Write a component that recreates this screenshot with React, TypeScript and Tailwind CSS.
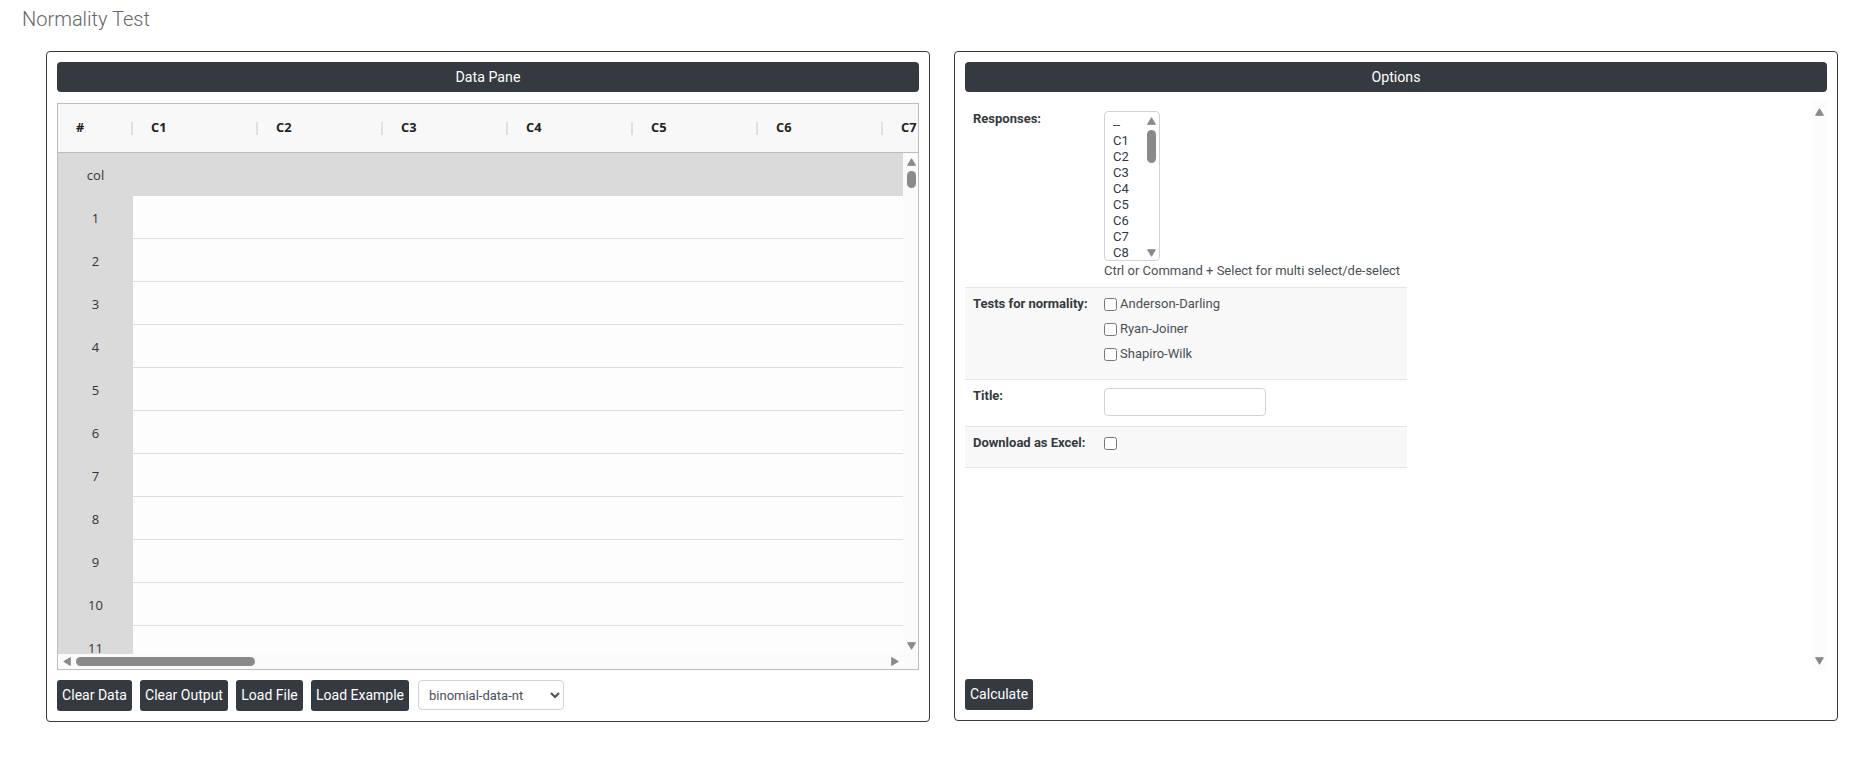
const Tri = ({ dir, className }: { dir: "up" | "down" | "left" | "right"; className?: string }) => {
  const pts = {
    up: "4.5,0.7 8.4,7.3 0.6,7.3",
    down: "0.6,0.7 8.4,0.7 4.5,7.3",
    left: "7.3,0.6 7.3,8.4 0.7,4.5",
    right: "0.7,0.6 0.7,8.4 7.3,4.5",
  }[dir];
  const size = dir === "up" || dir === "down" ? "w-[9px] h-[8px]" : "w-[8px] h-[9px]";
  const box = dir === "up" || dir === "down" ? "0 0 9 8" : "0 0 8 9";
  return (
    <svg viewBox={box} className={`${size} block shrink-0 ${className ?? ""}`}>
      <polygon points={pts} fill="#8a8a8a" stroke="#8a8a8a" strokeWidth="1" strokeLinejoin="round" />
    </svg>
  );
};

const Btn = ({ children, className }: { children: string; className: string }) => (
  <button className={`h-[31px] shrink-0 text-center rounded-[3px] bg-[#343a40] text-white text-[14px] leading-[31px] whitespace-nowrap font-['Roboto',sans-serif] ${className}`}>
    {children}
  </button>
);

const columns = ["C1", "C2", "C3", "C4", "C5", "C6", "C7"];
const rows = ["1", "2", "3", "4", "5", "6", "7", "8", "9", "10", "11"];
const responseOptions = ["--", "C1", "C2", "C3", "C4", "C5", "C6", "C7", "C8"];
const tests = ["Anderson-Darling", "Ryan-Joiner", "Shapiro-Wilk"];

const Label = ({ children }: { children: string }) => (
  <div className="w-[139px] shrink-0 pl-[8px] text-[13px] leading-[16px] font-bold text-[#343a40] whitespace-nowrap">
    {children}
  </div>
);

const DataPane = () => (
  <section className="w-[884px] h-[671px] shrink-0 border border-[#343a40] rounded-[4px] p-[10px] flex flex-col">
    <div className="h-[30px] shrink-0 rounded-[4px] bg-[#343a40] text-white text-[14.2px] leading-[31px] text-center">
      Data Pane
    </div>
    <div className="mt-[11px] h-[567px] shrink-0 border border-[#bdbdbd] flex flex-col overflow-hidden font-['Open_Sans',sans-serif]">
      <div className="h-[49px] shrink-0 flex items-center bg-[#f8f8f8] border-b border-[#bdbdbd] overflow-hidden">
        <div className="w-[73px] shrink-0 pl-[18px] text-[12.8px] font-bold text-[#222]">#</div>
        {columns.map((c) => (
          <div key={c} className="w-[125px] shrink-0 flex items-center">
            <div className="w-[2px] h-[13px] bg-[#e0e0e0] shrink-0" />
            <div className="ml-[18px] text-[12.8px] font-bold text-[#222]">{c}</div>
          </div>
        ))}
      </div>
      <div className="h-[501px] shrink-0 flex">
        <div className="w-[845px] shrink-0 overflow-hidden">
          <div className="h-[43px] bg-[#dadada] flex">
            <div className="w-[75px] text-center text-[13px] leading-[45px] text-[#333]">col</div>
          </div>
          {rows.map((r) => (
            <div key={r} className="h-[43px] flex bg-[#fdfdfd] border-b border-[#dedede]">
              <div className="w-[75px] h-[43px] shrink-0 bg-[#dadada] text-center text-[13px] leading-[45px] text-[#333]">
                {r}
              </div>
            </div>
          ))}
        </div>
        <div className="w-[16px] shrink-0 bg-[#fbfbfb] flex flex-col items-center">
          <Tri dir="up" className="mt-[5px]" />
          <div className="mt-[5px] w-[9px] h-[17px] rounded-full bg-[#8a8a8a]" />
          <Tri dir="down" className="mt-auto mb-[4px]" />
        </div>
      </div>
      <div className="h-[15px] shrink-0 bg-[#fbfbfb] flex items-center pl-[5px] pr-[19px]">
        <Tri dir="left" />
        <div className="ml-[5px] w-[179px] h-[9px] rounded-full bg-[#8a8a8a]" />
        <Tri dir="right" className="ml-auto" />
      </div>
    </div>
    <div className="mt-[10px] flex items-start gap-[8px]">
      <Btn className="w-[75px]">Clear Data</Btn>
      <Btn className="w-[88px]">Clear Output</Btn>
      <Btn className="w-[67px]">Load File</Btn>
      <Btn className="w-[98px]">Load Example</Btn>
      <select
        defaultValue="binomial-data-nt"
        className="ml-[1px] w-[146px] h-[30px] pl-[6px] bg-white border border-[#ced4da] rounded-[4px] text-[13px] text-[#495057]"
      >
        <option value="binomial-data-nt">binomial-data-nt</option>
      </select>
    </div>
  </section>
);

const OptionsPane = () => (
  <section className="w-[884px] h-[670px] shrink-0 border border-[#343a40] rounded-[4px] p-[10px] flex flex-col">
    <div className="h-[30px] shrink-0 rounded-[4px] bg-[#343a40] text-white text-[14.2px] leading-[31px] text-center">
      Options
    </div>
    <div className="h-[577px] shrink-0 flex">
      <div className="w-[442px] shrink-0 pt-[11px] text-[13px] text-[#495057]">
        <div className="h-[185px] flex pt-[8px] border-b border-[#e6e6e6]">
          <Label>Responses:</Label>
          <div>
            <div className="w-[56px] h-[150px] border border-[#ced4da] rounded-[4px] flex overflow-hidden">
              <div className="flex-1 pl-[8px] pt-[5px] text-[#343a40] leading-[16px]">
                {responseOptions.map((o) => (
                  <div key={o} className="h-[16px]">{o}</div>
                ))}
              </div>
              <div className="w-[13px] mr-[1px] shrink-0 flex flex-col items-center">
                <Tri dir="up" className="mt-[5px]" />
                <div className="mt-[5px] w-[9px] h-[33px] rounded-full bg-[#8a8a8a]" />
                <Tri dir="down" className="mt-auto mb-[3px]" />
              </div>
            </div>
            <div className="leading-[19px] whitespace-nowrap">Ctrl or Command + Select for multi select/de-select</div>
          </div>
        </div>
        <div className="h-[92px] flex pt-[8px] bg-[#f8f8f8] border-b border-[#e6e6e6]">
          <Label>Tests for normality:</Label>
          <div className="flex flex-col gap-[9px]">
            {tests.map((t) => (
              <label key={t} className="flex items-center h-[16px] leading-[16px]">
                <input type="checkbox" className="w-[13px] h-[13px] m-0 mr-[3px]" />
                {t}
              </label>
            ))}
          </div>
        </div>
        <div className="h-[47px] flex pt-[8px] border-b border-[#e6e6e6]">
          <Label>Title:</Label>
          <input type="text" className="w-[162px] h-[28px] bg-white border border-[#ced4da] rounded-[4px]" />
        </div>
        <div className="h-[41px] flex pt-[8px] bg-[#f8f8f8] border-b border-[#e6e6e6]">
          <Label>Download as Excel:</Label>
          <div className="h-[16px] flex items-center">
            <input type="checkbox" className="w-[13px] h-[13px] m-0" />
          </div>
        </div>
      </div>
      <div className="ml-auto mt-[8px] w-[15px] h-[570px] shrink-0 bg-[#fcfcfc] flex flex-col items-center">
        <Tri dir="up" className="mt-[8px]" />
        <Tri dir="down" className="mt-auto mb-[5px]" />
      </div>
    </div>
    <div className="mt-auto flex">
      <button className="h-[31px] px-[5px] rounded-[3px] bg-[#343a40] text-white text-[14px] leading-[31px]">Calculate</button>
    </div>
  </section>
);

export default function App() {
  return (
    <div className="min-h-[763px] bg-white font-['Roboto',sans-serif]">
      <h1 className="pl-[22px] pt-[7px] h-[51px] text-[20px] leading-[24px] font-light text-[#666]">Normality Test</h1>
      <main className="pl-[46px] flex items-start gap-[24px]">
        <DataPane />
        <OptionsPane />
      </main>
    </div>
  );
}
